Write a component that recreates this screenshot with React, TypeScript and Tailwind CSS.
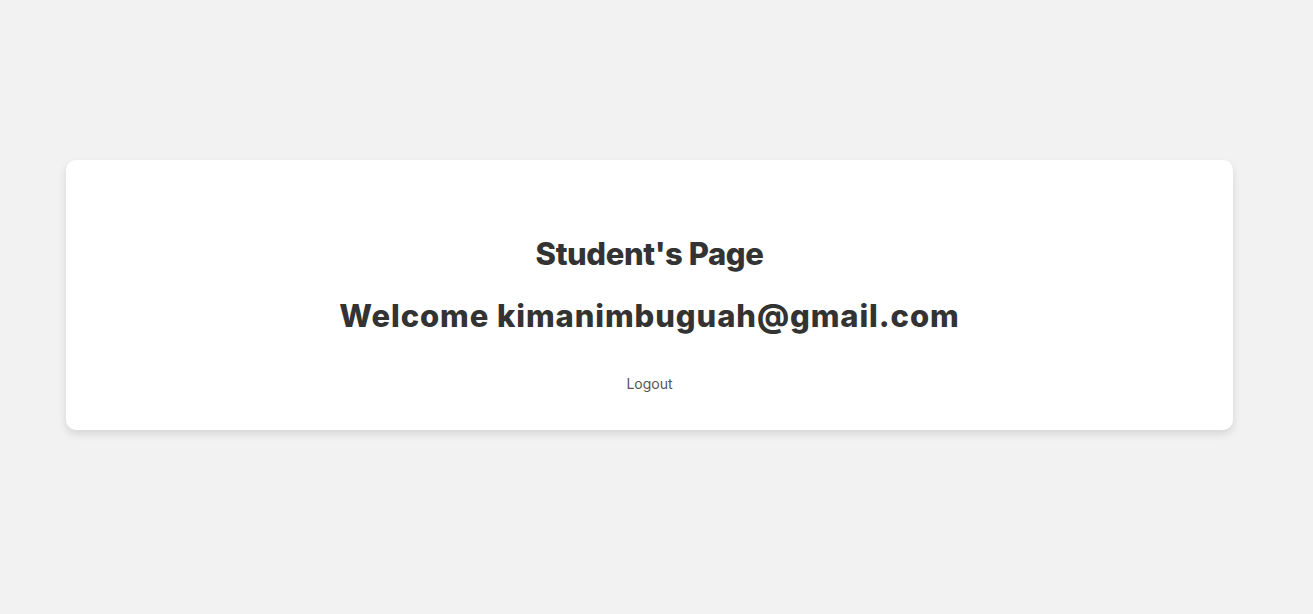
export default function App() {
  return (
    <div className="min-h-[614px] bg-[#f2f2f2] pt-[160px] font-['Inter','Liberation_Sans',sans-serif]">
      {/* card */}
      <div className="ml-[66px] w-[1167px] h-[270px] bg-white rounded-[10px] shadow-[0_4px_8px_rgba(0,0,0,0.12)] flex flex-col items-center pt-[72px]">
        <h1 className="text-[31px] leading-[44px] font-extrabold text-[#333] tracking-[-0.4px]">Student's Page</h1>
        <h2 className="mt-[18px] text-[31px] leading-[44px] font-extrabold text-[#333] tracking-[0.9px]">
          Welcome kimanimbuguah@gmail.com
        </h2>
        <button className="mt-[36px] text-[14px] leading-[20px] text-[#555]">Logout</button>
      </div>
    </div>
  );
}
